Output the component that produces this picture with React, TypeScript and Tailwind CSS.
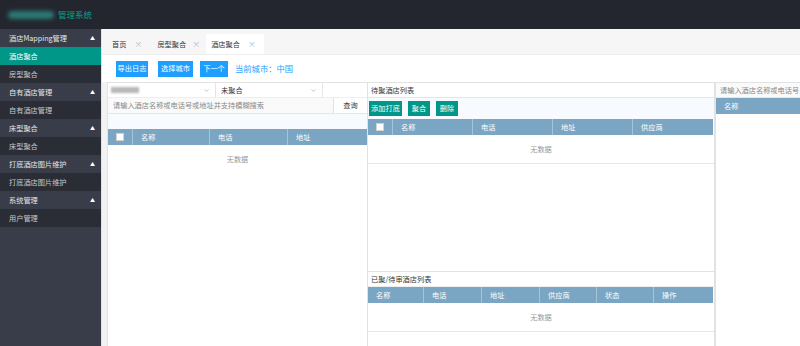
import { ChevronDown } from 'lucide-react'

const font = { fontFamily: '"Noto Sans CJK SC", "Noto Sans", sans-serif' }

const menu = [
  { title: '酒店Mapping管理', items: ['酒店聚合', '房型聚合'] },
  { title: '自有酒店管理', items: ['自有酒店管理'] },
  { title: '床型聚合', items: ['床型聚合'] },
  { title: '打底酒店图片维护', items: ['打底酒店图片维护'] },
  { title: '系统管理', items: ['用户管理'] },
]

function Check() {
  return <div className="w-[8px] h-[8px] bg-white border border-[#d2d2d2]" />
}

function Empty({ h }: { h: string }) {
  return (
    <div className={`flex items-center justify-center text-[#999] border-b border-[#e6e6e6] ${h}`}>
      无数据
    </div>
  )
}

export default function App() {
  return (
    <div className="w-[800px] h-[346px] overflow-hidden flex flex-col text-[7.2px] bg-white" style={font}>
      {/* header */}
      <div className="h-[29px] shrink-0 bg-[#23262e] flex items-center pl-[8px]">
        <div className="w-[46px] h-[8px] bg-[#2b7a73] rounded-sm blur-[2px] mr-[4px]" />
        <span className="text-[8.5px] text-[#0d9f8e]">管理系统</span>
      </div>

      <div className="flex flex-1 min-h-0">
        {/* sidebar */}
        <div className="w-[101px] shrink-0 bg-[#393d49] text-[#e6e6e6]">
          {menu.map(g => (
            <div key={g.title}>
              <div className="h-[18px] flex items-center justify-between pl-[9px] pr-[6px]">
                <span>{g.title}</span>
                <span className="text-[5px] text-white">▲</span>
              </div>
              {g.items.map(it => (
                <div key={it}
                  className={`h-[18px] flex items-center pl-[9px] ${it === '酒店聚合' && g.title === '酒店Mapping管理' ? 'bg-[#009688] text-white' : 'bg-[#2a2d36] text-[#c8c8c8]'}`}>
                  {it}
                </div>
              ))}
            </div>
          ))}
        </div>

        {/* main */}
        <div className="flex-1 flex flex-col min-w-0 border-l border-[#e2e2e2]">
          {/* tabs */}
          <div className="h-[26px] shrink-0 bg-[#f6f6f6] flex items-end pl-[10px] text-[#333] border-b border-[#eeeeee]">
            <div className="h-[20px] flex items-center">
              首页<span className="ml-[8px] text-[#bbb] text-[8px]">×</span>
            </div>
            <div className="h-[20px] flex items-center ml-[15px]">
              房型聚合<span className="ml-[6px] text-[#bbb] text-[8px]">×</span>
            </div>
            <div className="h-[20px] flex items-center ml-[6px] pl-[5px] pr-[8px] bg-white">
              酒店聚合<span className="ml-[8px] text-[#bbb] text-[8px]">×</span>
            </div>
          </div>

          {/* buttons */}
          <div className="h-[27px] shrink-0 flex items-center pl-[14px]">
            <div className="h-[16px] w-[32px] flex items-center justify-center bg-[#1e9fff] text-white">导出日志</div>
            <div className="h-[16px] w-[35px] ml-[10px] flex items-center justify-center bg-[#1e9fff] text-white">选择城市</div>
            <div className="h-[16px] w-[28px] ml-[7px] flex items-center justify-center bg-[#1e9fff] text-white">下一个</div>
            <span className="ml-[7px] text-[#1e9fff] text-[8.3px]">当前城市：中国</span>
          </div>

          <div className="flex flex-1 min-h-0 bg-[#f2f2f2] pl-[5px]">
            {/* left panel */}
            <div className="w-[261px] shrink-0 bg-white border-l border-r border-t border-[#e2e2e2] flex flex-col">
              <div className="h-[15px] flex border-b border-[#eee]">
                <div className="w-[108px] flex items-center justify-between pl-[3px] pr-[5px] border-r border-[#e6e6e6]">
                  <div className="w-[28px] h-[6px] bg-[#b8b8b8] blur-[1px]" />
                  <ChevronDown size={7} className="text-[#999]" />
                </div>
                <div className="w-[107px] flex items-center justify-between pl-[5px] pr-[5px] border-r border-[#e6e6e6]">
                  <span className="text-[#333]">未聚合</span>
                  <ChevronDown size={7} className="text-[#999]" />
                </div>
              </div>
              <div className="h-[16px] flex border-b border-[#e6e6e6]">
                <div className="flex-1 flex items-center pl-[5px] text-[#888] bg-[#fafafa] border-r border-[#e2e2e2]">
                  请输入酒店名称或电话号或地址并支持模糊搜索
                </div>
                <div className="w-[33px] flex items-center justify-center text-[#333]">查询</div>
              </div>
              <div className="h-[15px] bg-[#f7fbff]" />
              <div className="h-[16px] grid grid-cols-[25px_77px_78px_1fr] bg-[#7aa6c3] text-white">
                <div className="flex items-center justify-center border-r border-[#a6c4d8]"><Check /></div>
                <div className="flex items-center pl-[8px] border-r border-[#a6c4d8]">名称</div>
                <div className="flex items-center pl-[8px] border-r border-[#a6c4d8]">电话</div>
                <div className="flex items-center pl-[8px]">地址</div>
              </div>
              <div className="h-[28px] flex items-center justify-center text-[#999]">无数据</div>
            </div>

            {/* middle panel */}
            <div className="w-[347px] shrink-0 bg-white border-t border-r border-[#e2e2e2] flex flex-col">
              <div className="h-[15px] flex items-center pl-[3px] text-[#333] border-b border-[#e6e6e6]">待聚酒店列表</div>
              <div className="h-[21px] flex items-center pl-[1px] gap-[6px] bg-[#f7fbff]">
                <div className="h-[15px] w-[33px] flex items-center justify-center bg-[#009688] text-white">添加打底</div>
                <div className="h-[15px] w-[22px] flex items-center justify-center bg-[#009688] text-white">聚合</div>
                <div className="h-[15px] w-[22px] flex items-center justify-center bg-[#009688] text-white">删除</div>
              </div>
              <div className="h-[16px] grid grid-cols-[25px_80px_80px_80px_80px] bg-[#7aa6c3] text-white mr-[1px]">
                <div className="flex items-center justify-center border-r border-[#a6c4d8]"><Check /></div>
                <div className="flex items-center pl-[8px] border-r border-[#a6c4d8]">名称</div>
                <div className="flex items-center pl-[8px] border-r border-[#a6c4d8]">电话</div>
                <div className="flex items-center pl-[8px] border-r border-[#a6c4d8]">地址</div>
                <div className="flex items-center pl-[8px]">供应商</div>
              </div>
              <Empty h="h-[29px]" />
              <div className="flex-1 min-h-0 flex flex-col justify-end">
                <div className="border-t border-[#e2e2e2]">
                  <div className="h-[15px] flex items-center pl-[3px] text-[#333] border-b border-[#eee]">已聚/待审酒店列表</div>
                  <div className="h-[16px] grid grid-cols-[56px_58px_58px_57px_57px_58px] bg-[#7aa6c3] text-white mr-[1px]">
                    {['名称', '电话', '地址', '供应商', '状态', '操作'].map((c, i) => (
                      <div key={c} className={`flex items-center pl-[8px] ${i < 5 ? 'border-r border-[#a6c4d8]' : ''}`}>{c}</div>
                    ))}
                  </div>
                  <Empty h="h-[29px]" />
                  <div className="h-[14px]" />
                </div>
              </div>
            </div>

            {/* right panel */}
            <div className="flex-1 min-w-0 bg-white border-t border-l border-[#e2e2e2] flex flex-col">
              <div className="h-[15px] flex items-center pl-[4px] text-[#888] bg-[#fafafa] whitespace-nowrap overflow-hidden border-b border-[#e6e6e6]">
                请输入酒店名称或电话号
              </div>
              <div className="h-[16px] flex items-center pl-[8px] bg-[#7aa6c3] text-white">名称</div>
            </div>
          </div>
        </div>
      </div>
    </div>
  )
}
